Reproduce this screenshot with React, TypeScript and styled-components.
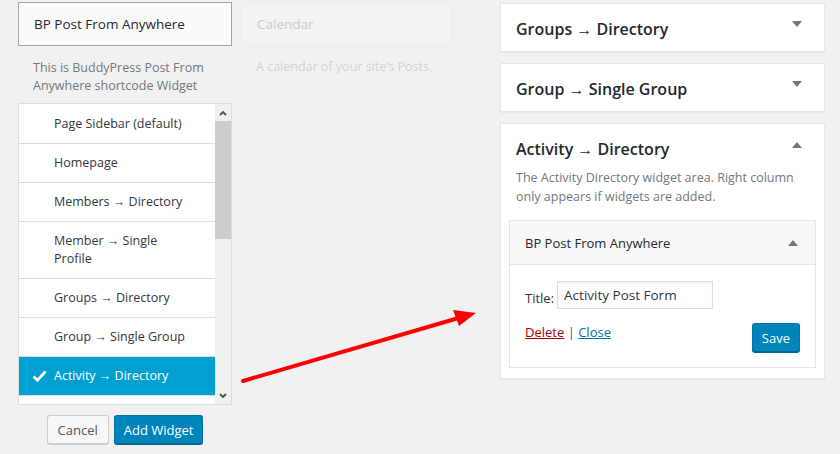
import React from 'react';
import styled, { createGlobalStyle } from 'styled-components';

const GlobalStyle = createGlobalStyle`
  html, body {
    margin: 0;
    padding: 0;
    background: #f1f1f1;
  }
  body {
    font-family: "Open Sans", "Noto Sans", sans-serif;
    font-size: 13px;
    color: #23282d;
  }
  * {
    box-sizing: border-box;
  }
`;

const Screen = styled.div`
  position: relative;
  width: 840px;
  height: 454px;
  display: flex;
  align-items: flex-start;
  overflow: hidden;
`;

const LeftColumn = styled.div`
  margin-left: 18px;
  width: 214px;
  padding-top: 2px;
  display: flex;
  flex-direction: column;
`;

const GhostColumn = styled.div`
  margin-left: 9px;
  width: 212px;
  padding-top: 3px;
`;

const RightColumn = styled.div`
  margin-left: 47px;
  width: 325px;
  padding-top: 3px;
  display: flex;
  flex-direction: column;
  gap: 11px;
`;

const WidgetCard = styled.div<{ $ghost?: boolean }>`
  height: ${(p) => (p.$ghost ? '42px' : '44px')};
  border: 1px solid ${(p) => (p.$ghost ? '#ebebeb' : '#a0a5aa')};
  background: ${(p) => (p.$ghost ? '#f3f3f3' : '#fafafa')};
  padding: 0 15px;
  display: flex;
  align-items: center;
  font-size: 13.5px;
  color: ${(p) => (p.$ghost ? '#c9c9c9' : '#23282d')};
`;

const WidgetDesc = styled.p<{ $ghost?: boolean }>`
  margin: 13px 0 0;
  padding: 0 14px 0 15px;
  line-height: 18px;
  font-size: 12.5px;
  color: ${(p) => (p.$ghost ? '#d2d2d2' : '#72777c')};
`;

const ChooserBox = styled.div`
  margin-top: 8px;
  height: 302px;
  border: 1px solid #ddd;
  background: #fff;
  display: flex;
`;

const ChooserList = styled.ul`
  list-style: none;
  margin: 0;
  padding: 1px 0 0;
  flex: 1;
  overflow: hidden;
`;

const ChooserItem = styled.li<{ $selected?: boolean }>`
  display: flex;
  align-items: flex-start;
  padding: 10px 22px 10px 13px;
  line-height: 18px;
  font-size: 12.5px;
  border-bottom: 1px solid #ddd;
  background: ${(p) => (p.$selected ? '#00a0d2' : '#fff')};
  color: ${(p) => (p.$selected ? '#fff' : '#32373c')};
`;

const CheckSlot = styled.span`
  width: 22px;
  flex: none;
  height: 18px;
  display: flex;
  align-items: center;
`;

const ScrollTrack = styled.div`
  width: 16px;
  flex: none;
  background: #f0f0f0;
  display: flex;
  flex-direction: column;
`;

const ScrollArrow = styled.div`
  height: 17px;
  display: flex;
  align-items: center;
  justify-content: center;
`;

const ScrollThumb = styled.div`
  height: 118px;
  background: #cdcdcd;
`;

const ScrollSpace = styled.div`
  flex: 1;
`;

const ButtonRow = styled.div`
  margin-top: 10px;
  display: flex;
  justify-content: center;
  gap: 5px;
`;

const Button = styled.button<{ $primary?: boolean }>`
  margin: 0;
  height: 29px;
  padding: 0 ${(p) => (p.$primary ? 9 : 10)}px;
  border-radius: 3px;
  font-family: inherit;
  font-size: 13px;
  line-height: 26px;
  cursor: pointer;
  border: 1px solid ${(p) => (p.$primary ? '#0073aa' : '#ccc')};
  border-bottom-color: ${(p) => (p.$primary ? '#006799' : '#ccc')};
  background: ${(p) => (p.$primary ? '#0085ba' : '#f7f7f7')};
  color: ${(p) => (p.$primary ? '#fff' : '#555')};
  box-shadow: 0 1px 0 ${(p) => (p.$primary ? '#006799' : '#ccc')};
`;

const SidebarBox = styled.div`
  background: #fff;
  border: 1px solid #e5e5e5;
  box-shadow: 0 1px 1px rgba(0, 0, 0, 0.04);
`;

const SidebarHead = styled.div<{ $open?: boolean }>`
  display: flex;
  justify-content: space-between;
  align-items: flex-start;
  padding: ${(p) => (p.$open ? '15px 15px 0' : '17px 15px 13px')};
`;

const SidebarTitle = styled.h2<{ $open?: boolean }>`
  margin: 0;
  font-size: 16px;
  font-weight: 600;
  line-height: ${(p) => (p.$open ? '20px' : '17px')};
  color: #23282d;
`;

const Toggle = styled.span<{ $up?: boolean; $top: number; $right: number }>`
  width: 0;
  height: 0;
  margin-top: ${(p) => p.$top}px;
  margin-right: ${(p) => p.$right}px;
  border-left: 5px solid transparent;
  border-right: 5px solid transparent;
  ${(p) => (p.$up ? 'border-bottom: 6px solid #72777c;' : 'border-top: 6px solid #72777c;')}
`;

const SidebarDesc = styled.p`
  margin: 9px 0 0;
  padding: 0 15px;
  line-height: 19px;
  font-size: 12.5px;
  color: #72777c;
`;

const SidebarBody = styled.div`
  padding: 14px 8px 10px;
`;

const WidgetPanel = styled.div`
  border: 1px solid #e5e5e5;
  background: #fff;
`;

const WidgetHead = styled.div`
  height: 44px;
  padding: 0 17px 0 15px;
  background: #f8f8f8;
  border-bottom: 1px solid #e5e5e5;
  display: flex;
  align-items: center;
  justify-content: space-between;
  font-size: 13px;
  color: #23282d;
`;

const WidgetInside = styled.div`
  padding: 16px 15px 15px;
`;

const FieldRow = styled.label`
  display: flex;
  align-items: flex-end;
  gap: 3px;
  font-size: 13px;
  color: #32373c;
  line-height: 22px;
`;

const TextInput = styled.input`
  width: 156px;
  height: 28px;
  border: 1px solid #ddd;
  box-shadow: inset 0 1px 2px rgba(0, 0, 0, 0.07);
  padding: 0 6px;
  font-family: inherit;
  font-size: 13.5px;
  color: #32373c;
  outline: none;
`;

const ControlRow = styled.div`
  margin-top: 14px;
  display: flex;
  justify-content: space-between;
  align-items: flex-start;
`;

const LinkGroup = styled.div`
  line-height: 18px;
  font-size: 13px;
  color: #555;
`;

const ActionLink = styled.a<{ $danger?: boolean }>`
  color: ${(p) => (p.$danger ? '#a00' : '#0073aa')};
  text-decoration: underline;
  cursor: pointer;
`;

const Overlay = styled.svg`
  position: absolute;
  left: 0;
  top: 0;
  pointer-events: none;
`;

const Chevron = ({ up }: { up?: boolean }) => (
  <svg width="8" height="6" viewBox="0 0 8 6">
    <path
      d={up ? 'M1 5 L4 2 L7 5' : 'M1 1 L4 4 L7 1'}
      fill="none"
      stroke="#505050"
      strokeWidth="1.8"
    />
  </svg>
);

const CheckIcon = () => (
  <svg width="15" height="12" viewBox="0 0 15 12">
    <path d="M1.5 6.5 L5.5 10.2 L13.5 1.5" fill="none" stroke="#fff" strokeWidth="2.8" />
  </svg>
);

const sidebars = [
  'Page Sidebar (default)',
  'Homepage',
  'Members → Directory',
  'Member → Single Profile',
  'Groups → Directory',
  'Group → Single Group',
  'Activity → Directory',
];

export default function App() {
  return (
    <>
      <GlobalStyle />
      <Screen>
        <LeftColumn>
          <WidgetCard>BP Post From Anywhere</WidgetCard>
          <WidgetDesc>This is BuddyPress Post From Anywhere shortcode Widget</WidgetDesc>
          <ChooserBox>
            <ChooserList>
              {sidebars.map((name) => {
                const selected = name === 'Activity → Directory';
                return (
                  <ChooserItem key={name} $selected={selected}>
                    <CheckSlot>{selected && <CheckIcon />}</CheckSlot>
                    <span>{name}</span>
                  </ChooserItem>
                );
              })}
            </ChooserList>
            <ScrollTrack>
              <ScrollArrow>
                <Chevron up />
              </ScrollArrow>
              <ScrollThumb />
              <ScrollSpace />
              <ScrollArrow>
                <Chevron />
              </ScrollArrow>
            </ScrollTrack>
          </ChooserBox>
          <ButtonRow>
            <Button>Cancel</Button>
            <Button $primary>Add Widget</Button>
          </ButtonRow>
        </LeftColumn>

        <GhostColumn>
          <WidgetCard $ghost>Calendar</WidgetCard>
          <WidgetDesc $ghost>A calendar of your site’s Posts.</WidgetDesc>
        </GhostColumn>

        <RightColumn>
          <SidebarBox>
            <SidebarHead>
              <SidebarTitle>Groups → Directory</SidebarTitle>
              <Toggle $top={0} $right={7} />
            </SidebarHead>
          </SidebarBox>
          <SidebarBox>
            <SidebarHead>
              <SidebarTitle>Group → Single Group</SidebarTitle>
              <Toggle $top={0} $right={7} />
            </SidebarHead>
          </SidebarBox>
          <SidebarBox>
            <SidebarHead $open>
              <SidebarTitle $open>Activity → Directory</SidebarTitle>
              <Toggle $up $top={3} $right={7} />
            </SidebarHead>
            <SidebarDesc>
              The Activity Directory widget area. Right column only appears if widgets are added.
            </SidebarDesc>
            <SidebarBody>
              <WidgetPanel>
                <WidgetHead>
                  BP Post From Anywhere
                  <Toggle $up $top={0} $right={0} />
                </WidgetHead>
                <WidgetInside>
                  <FieldRow>
                    Title:
                    <TextInput defaultValue="Activity Post Form" />
                  </FieldRow>
                  <ControlRow>
                    <LinkGroup>
                      <ActionLink $danger>Delete</ActionLink> | <ActionLink>Close</ActionLink>
                    </LinkGroup>
                    <Button $primary>Save</Button>
                  </ControlRow>
                </WidgetInside>
              </WidgetPanel>
            </SidebarBody>
          </SidebarBox>
        </RightColumn>

        <Overlay width="840" height="454" viewBox="0 0 840 454">
          <line x1="243" y1="381" x2="462" y2="317" stroke="#f00" strokeWidth="4" strokeLinecap="round" />
          <polygon points="453,310 476,313 459,326" fill="#f00" />
        </Overlay>
      </Screen>
    </>
  );
}
